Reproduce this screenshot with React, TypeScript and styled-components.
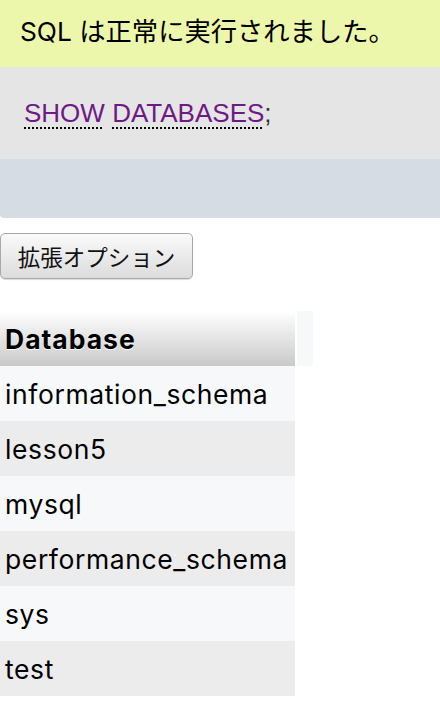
import { createGlobalStyle, styled } from 'styled-components';

const GlobalStyle = createGlobalStyle`
  html, body {
    margin: 0;
    padding: 0;
    background: #fff;
  }
  body {
    font-family: Inter, 'Noto Sans CJK JP', sans-serif;
    color: #000;
  }
`;

const App = () => {
  return (
    <>
      <GlobalStyle />
      <Page>
        <ResultBox>
          <Message>SQL は正常に実行されました。</Message>
          <QueryBox>
            <Keyword>SHOW</Keyword> <Keyword>DATABASES</Keyword>;
          </QueryBox>
          <Tools />
        </ResultBox>
        <OptionButton>拡張オプション</OptionButton>
        <DataTable>
          <thead>
            <tr>
              <HeadCell>Database</HeadCell>
              <SpareCell />
            </tr>
          </thead>
          <tbody>
            {DATABASES.map((name, i) => (
              <Row key={name} even={i % 2 === 1}>
                <Cell>{name}</Cell>
              </Row>
            ))}
          </tbody>
        </DataTable>
      </Page>
    </>
  );
};

const Page = styled.div`
  width: 440px;
`;

const ResultBox = styled.div`
  width: 440px;
  border-radius: 0 0 0 4px;
  overflow: hidden;
`;

const Message = styled.div`
  height: 67px;
  box-sizing: border-box;
  padding: 14px 0 0 20px;
  background: #edf7ab;
  font-family: Inter, 'Noto Sans CJK JP', sans-serif;
  font-size: 26.3px;
  line-height: 36px;
  white-space: nowrap;
`;

const QueryBox = styled.div`
  height: 92px;
  box-sizing: border-box;
  padding: 29px 0 0 24px;
  background: #e5e5e5;
  font-family: 'Liberation Sans', sans-serif;
  font-size: 26px;
  line-height: 34px;
  color: #333;
`;

const Keyword = styled.span`
  color: #6d1a85;
  text-decoration: underline dotted #000;
  text-decoration-thickness: 2px;
  text-underline-offset: 5px;
`;

const Tools = styled.div`
  height: 59px;
  background: #d5dce3;
`;

const OptionButton = styled.button`
  display: block;
  margin: 15px 0 0 0;
  width: 193px;
  height: 46px;
  padding: 0;
  border: 1px solid #a9a9a9;
  border-radius: 5px;
  background: linear-gradient(#fafafa, #dcdcdc);
  box-shadow: 0 1px 1px rgba(0, 0, 0, 0.15);
  font-family: 'Noto Sans CJK JP', sans-serif;
  font-size: 22.5px;
  color: #111;
`;

const DataTable = styled.table`
  margin-top: 32px;
  border-collapse: separate;
  border-spacing: 0;
`;

const HeadCell = styled.th`
  width: 295px;
  height: 55px;
  box-sizing: border-box;
  padding: 0 5px;
  text-align: left;
  background: linear-gradient(#ffffff, #c9c9c9);
  font-size: 26.5px;
  font-weight: 700;
  letter-spacing: 1px;
  text-shadow: 0 1px 0 #fff;
`;

const SpareCell = styled.th`
  width: 16px;
  padding: 0;
  border-left: 2px solid #fff;
  background: #f7f8fa;
`;

const Row = styled.tr<{ even: boolean }>`
  background: ${(props) => (props.even ? '#ececed' : '#f7f8fa')};
`;

const Cell = styled.td`
  height: 55px;
  box-sizing: border-box;
  padding: 0 5px;
  font-size: 26.5px;
  letter-spacing: 0.6px;
  white-space: nowrap;
`;

export default App;

const DATABASES = [
  'information_schema',
  'lesson5',
  'mysql',
  'performance_schema',
  'sys',
  'test',
];
